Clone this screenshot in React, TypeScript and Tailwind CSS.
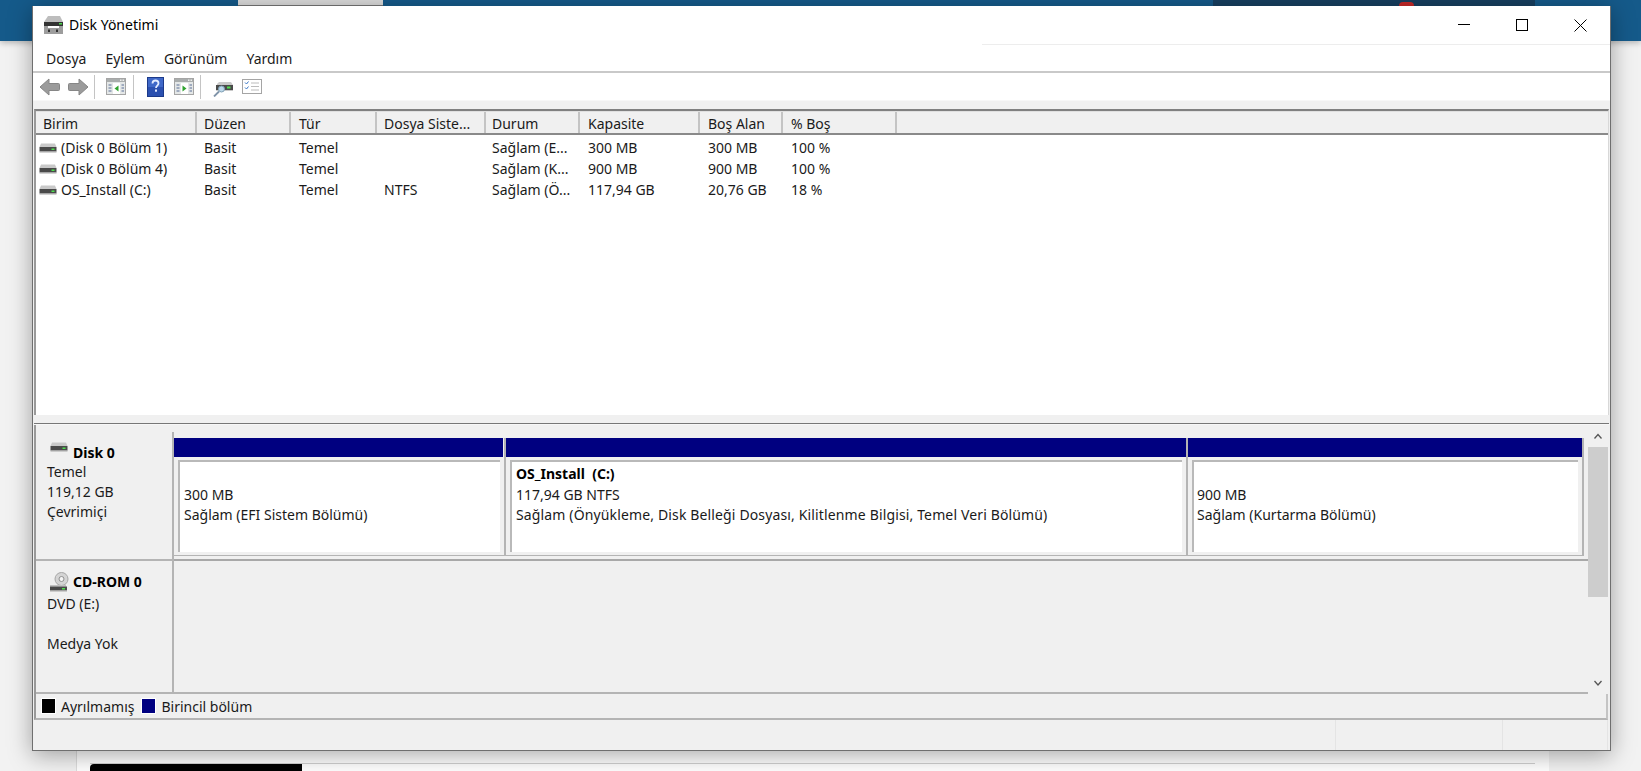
import React from "react"

const font = "font-['Noto_Sans',sans-serif]"

const columns = [
  { label: "Birim", width: "w-[161px]", pad: "pl-[7px]", cellPad: "pl-[3px]" },
  { label: "Düzen", width: "w-[94px]", pad: "pl-[7px]", cellPad: "pl-[7px]" },
  { label: "Tür", width: "w-[86px]", pad: "pl-[8px]", cellPad: "pl-[8px]" },
  { label: "Dosya Siste...", width: "w-[109px]", pad: "pl-[7px]", cellPad: "pl-[7px]" },
  { label: "Durum", width: "w-[94px]", pad: "pl-[6px]", cellPad: "pl-[6px]" },
  { label: "Kapasite", width: "w-[120px]", pad: "pl-[8px]", cellPad: "pl-[8px]" },
  { label: "Boş Alan", width: "w-[83px]", pad: "pl-[8px]", cellPad: "pl-[8px]" },
  { label: "% Boş", width: "w-[114px]", pad: "pl-[8px]", cellPad: "pl-[8px]" },
]

const rows = [
  ["(Disk 0 Bölüm 1)", "Basit", "Temel", "", "Sağlam (E...", "300 MB", "300 MB", "100 %"],
  ["(Disk 0 Bölüm 4)", "Basit", "Temel", "", "Sağlam (K...", "900 MB", "900 MB", "100 %"],
  ["OS_Install (C:)", "Basit", "Temel", "NTFS", "Sağlam (Ö...", "117,94 GB", "20,76 GB", "18 %"],
]

function DiskIcon() {
  return (
    <svg width="18" height="10" viewBox="0 0 18 10" className="shrink-0">
      <path d="M2 0.5h14l1.5 3.5H0.5z" fill="#c9c9c9" />
      <rect x="0.5" y="4" width="17" height="4.5" fill="#4a4a4a" />
      <rect x="0.5" y="8.5" width="17" height="1" fill="#a8a8a8" />
      <rect x="12.5" y="5.5" width="3" height="1.5" fill="#4ee04e" />
    </svg>
  )
}

function CdIcon() {
  return (
    <svg width="20" height="20" viewBox="0 0 20 20" className="shrink-0">
      <circle cx="12.500" cy="7" r="6.500" fill="#d4d4d4" stroke="#a6a6a6" />
      <circle cx="12.500" cy="7" r="2.500" fill="#f4f4f4" stroke="#8f8f8f" />
      <rect x="1" y="13" width="16" height="1.500" fill="#c0c0c0" />
      <rect x="1" y="14.500" width="17" height="4" fill="#4a4a4a" />
      <rect x="1" y="18.500" width="17" height="1" fill="#a8a8a8" />
      <rect x="13" y="16" width="3" height="1.500" fill="#4ee04e" />
    </svg>
  )
}

function TitleIcon() {
  return (
    <svg width="21" height="20" viewBox="0 0 21 20" className="shrink-0">
      <path d="M5 1h12l3 6H1z" fill="#bdbdbd" />
      <rect x="1" y="7" width="19" height="4" fill="#333" />
      <rect x="16" y="8" width="3" height="1.5" fill="#49d849" />
      <path d="M1 11h4v2h11v-2h4v8H1z" fill="#9d9d9d" />
      <rect x="5" y="14.5" width="2" height="2.5" fill="#333" />
      <rect x="13" y="14.5" width="2" height="2.5" fill="#333" />
    </svg>
  )
}

function ArrowIcon({ flip }: { flip?: boolean }) {
  return (
    <svg width="21" height="18" viewBox="0 0 21 18" className={flip ? "-scale-x-100" : ""}>
      <path d="M10 1L1 9l9 8v-4.500h9.500a1 1 0 0 0 1-1v-5a1 1 0 0 0-1-1H10z" fill="#9b9b9b" stroke="#868686" />
    </svg>
  )
}

function PaneIcon({ right }: { right?: boolean }) {
  return (
    <svg width="20" height="17" viewBox="0 0 20 17">
      <rect x="0.500" y="0.500" width="19" height="16" fill="#e4e7e7" stroke="#a5a5a5" />
      <rect x="1" y="1" width="18" height="3" fill="#a9adad" />
      <rect x="14" y="1.500" width="1.500" height="1.500" fill="#eee" />
      <rect x="16.500" y="1.500" width="1.500" height="1.500" fill="#eee" />
      <rect x="7" y="5" width="7" height="11" fill="#fff" />
      {right ? (
        <path d="M8.500 7.500l4 3-4 3z" fill="#2fa32f" />
      ) : (
        <path d="M12.500 7.500l-4 3 4 3z" fill="#2fa32f" />
      )}
      <path d="M2.500 7h3M2.500 10h3M2.500 13h3M15.500 7h2.500M15.500 10h2.500M15.500 13h2.500" stroke="#5a6f96" />
    </svg>
  )
}

function HelpIcon() {
  return (
    <svg width="17" height="20" viewBox="0 0 17 20">
      <rect x="0.500" y="0.500" width="16" height="19" fill="#2b50b0" stroke="#1c3a8a" />
      <rect x="1" y="1" width="15" height="9" fill="#3f68c8" />
      <path d="M5.500 6.500c0-2 1.300-3 3-3s3 1 3 2.800c0 2.200-2.500 2.300-2.500 4.700" fill="none" stroke="#e4ecff" strokeWidth="1.800" />
      <rect x="8" y="12.500" width="2" height="2.200" fill="#e4ecff" />
    </svg>
  )
}

function ProbeIcon() {
  return (
    <svg width="20" height="20" viewBox="0 0 20 20">
      <path d="M4 7l2-2h12l2 3v6H3z" fill="#c9c9c9" />
      <rect x="3" y="8" width="17" height="5" fill="#4a4a4a" />
      <rect x="14" y="9.500" width="3.500" height="2" fill="#4ee04e" />
      <path d="M6 14.500L1 19.500" stroke="#7f93a8" strokeWidth="1.800" />
      <circle cx="8.500" cy="12" r="3" fill="#bcd8ea" stroke="#7f9fb5" />
    </svg>
  )
}

function ChecklistIcon() {
  return (
    <svg width="20" height="15" viewBox="0 0 20 15">
      <rect x="0.500" y="0.500" width="19" height="14" fill="#fff" stroke="#a5a5a5" />
      <path d="M3 3.500l1.500 1.500 2-2.500M3 8.500l1.500 1.500 2-2.500" fill="none" stroke="#3a78c8" />
      <path d="M9 4h8M9 7.500h8M9 11h8" stroke="#bcbcbc" />
    </svg>
  )
}

function ToolbarDivider() {
  return <div className="w-px h-[24px] bg-[#c4c4c4]" />
}

function Partition({
  width,
  bar,
  lines,
  pad,
  spread,
}: {
  width: string
  bar: string
  lines: string[]
  pad: string
  spread?: boolean
}) {
  return (
    <div className={`${width} h-full flex flex-col border-r-2 border-b border-[#b4b4b4]`}>
      <div className={`${bar} h-[19px] bg-[#000080] shrink-0`} />
      <div className="flex-1 pt-[3px] pl-[4px] pr-[4px] pb-[3px]">
        <div className={`h-full bg-white border-l-2 border-t-2 border-[#b9b9b9] pt-[2px] ${pad} text-[14px] leading-[20.500px] text-[#1a1a1a]`}>
          {lines.map((line, i) => (
            <div
              key={i}
              className={`whitespace-pre h-[20.500px] ${i === 0 && line ? "font-bold text-black" : ""} ${spread && i === 2 ? "tracking-[0.14px]" : ""}`}
            >
              {line}
            </div>
          ))}
        </div>
      </div>
    </div>
  )
}

export default function App() {
  return (
    <div className={`relative w-[1641px] h-[771px] overflow-hidden bg-[#f2f2f2] ${font}`}>
      {/* page behind the window */}
      <div className="h-[41px] bg-[#155a8a] shadow-[0_2px_6px_rgba(0,0,0,0.25)] flex items-start">
        <div className="ml-[238px] w-[145px] h-[6px] bg-[#dcdcdc] border-b border-[#777]" />
        <div className="relative ml-auto mr-[106px] w-[322px] h-[6px] bg-[#173f60]">
          <div className="absolute left-[186px] top-[2px] w-[15px] h-[4px] rounded-t-sm bg-[#c62828]" />
        </div>
      </div>
      <div className="ml-[76px] w-[1473px] h-[730px] bg-white border-l border-[#dddddd] flex flex-col justify-end">
        <div className="ml-[13px] w-[1445px] border-t border-[#d0d0d0] h-[8px]">
          <div className="w-[212px] h-[7px] bg-black rounded-tl-sm" />
        </div>
      </div>

      {/* window */}
      <div className="absolute left-[32px] top-[6px] w-[1579px] h-[745px] flex flex-col bg-[#f0f0f0] border-x border-b border-[#6f6f6f] shadow-[0_4px_22px_rgba(0,0,0,0.35)]">
        <div className="h-[38px] shrink-0 bg-white flex items-center pl-[10px]">
          <TitleIcon />
          <span className="ml-[5px] -mt-[2px] text-[14px] text-black">Disk Yönetimi</span>
          <div className="ml-auto flex items-center">
            <svg width="12" height="12" viewBox="0 0 12 12" className="mr-[46px]">
              <path d="M0 5.500h12" stroke="#000" />
            </svg>
            <svg width="12" height="12" viewBox="0 0 12 12" className="mr-[46px]">
              <rect x="0.500" y="0.500" width="11" height="11" fill="none" stroke="#000" />
            </svg>
            <svg width="13" height="13" viewBox="0 0 13 13" className="mr-[23px]">
              <path d="M0.500 0.500l12 12M12.500 0.500l-12 12" stroke="#000" />
            </svg>
          </div>
        </div>
        <div className="h-px shrink-0 bg-white">
          <div className="ml-[949px] h-px bg-[#ededed]" />
        </div>
        <div className="h-[26px] shrink-0 bg-white flex items-center gap-[19px] pl-[13px] text-[14px] text-[#1a1a1a]">
          <span>Dosya</span>
          <span>Eylem</span>
          <span>Görünüm</span>
          <span>Yardım</span>
        </div>
        <div className="h-[2px] shrink-0 bg-[#c9c9c9]" />
        <div className="h-[27px] shrink-0 bg-white flex items-center pl-[6px]">
          <ArrowIcon />
          <div className="w-[8px]" />
          <ArrowIcon flip />
          <div className="w-[5px]" />
          <ToolbarDivider />
          <div className="w-[11px]" />
          <PaneIcon />
          <div className="w-[7px]" />
          <ToolbarDivider />
          <div className="w-[13px]" />
          <HelpIcon />
          <div className="w-[10px]" />
          <PaneIcon right />
          <div className="w-[6px]" />
          <ToolbarDivider />
          <div className="w-[12px]" />
          <ProbeIcon />
          <div className="w-[9px]" />
          <ChecklistIcon />
        </div>
        <div className="h-[9px] shrink-0 bg-[#f0f0f0] border-t border-[#f7f7f7]" />

        {/* volume list */}
        <div className="shrink-0 ml-[1px] mr-[1px] border-l-2 border-r border-t-2 border-l-[#9a9a9a] border-r-[#d8d8d8] border-t-[#808080]">
          <div className="h-[22px] flex bg-[#f0f0f0] border-t border-[#e0e0e0]">
            {columns.map((col) => (
              <div
                key={col.label}
                className={`${col.width} ${col.pad} shrink-0 text-[14px] leading-[22px] pt-px text-[#1a1a1a] border-r-2 border-[#c4c4c4] whitespace-nowrap overflow-hidden`}
              >
                {col.label}
              </div>
            ))}
          </div>
          <div className="h-[2px] bg-[#8a8a8a]" />
          <div className="h-[280px] bg-white text-[14px] text-[#1a1a1a] pt-[2px]">
            {rows.map((row) => (
              <div key={row[0]} className="flex h-[21px] items-center">
                {row.map((cell, i) => (
                  <div
                    key={i}
                    className={`${columns[i].width} ${columns[i].cellPad} shrink-0 whitespace-nowrap flex items-center gap-[4px]`}
                  >
                    {i === 0 && <DiskIcon />}
                    {cell}
                  </div>
                ))}
              </div>
            ))}
          </div>
        </div>
        <div className="h-[8px] shrink-0 bg-[#f0f0f0]" />
        <div className="h-px shrink-0 ml-[1px] mr-[1px] bg-[#777]" />
        <div className="h-px shrink-0 bg-[#f7f7f7]" />

        {/* disk area */}
        <div className="h-[269px] shrink-0 flex ml-[1px] mr-[2px] border-l-2 border-[#9a9a9a]">
          <div className="flex-1 min-w-0 flex flex-col">
            <div className="h-[136px] flex shrink-0">
              <div className="w-[138px] shrink-0 mt-[7px] pt-[11px] pl-[11px] text-[14px] leading-[20px] text-[#1a1a1a] bg-[#f0f0f0] border-r-2 border-b-2 border-[#b4b4b4]">
                <div className="flex items-center gap-[5px] pl-[3px] font-bold text-black">
                  <span className="-mt-[12px]">
                    <DiskIcon />
                  </span>
                  Disk 0
                </div>
                <div className="-mt-px">Temel</div>
                <div>119,12 GB</div>
                <div>Çevrimiçi</div>
              </div>
              <div className="flex-1 min-w-0 pt-[13px] pb-[3px] border-b-2 border-[#a8a8a8] flex">
                <Partition width="w-[332px]" bar="w-[329px]" pad="pl-[4px]" lines={["", "300 MB", "Sağlam (EFI Sistem Bölümü)"]} />
                <Partition
                  width="w-[682px]"
                  bar="w-[680px]"
                  pad="pl-[4px]"
                  spread
                  lines={["OS_Install  (C:)", "117,94 GB NTFS", "Sağlam (Önyükleme, Disk Belleği Dosyası, Kilitlenme Bilgisi, Temel Veri Bölümü)"]}
                />
                <Partition width="w-[396px]" bar="w-[394px]" pad="pl-[3px]" lines={["", "900 MB", "Sağlam (Kurtarma Bölümü)"]} />
              </div>
            </div>
            <div className="flex-1 flex min-h-0 border-b-2 border-[#b4b4b4]">
              <div className="w-[138px] shrink-0 pt-[9px] pl-[13px] text-[14px] leading-[20px] text-[#1a1a1a] border-r-2 border-[#b4b4b4]">
                <div className="flex items-center gap-[4px] font-bold text-black h-[24px]">
                  <CdIcon />
                  CD-ROM 0
                </div>
                <div className="-ml-[2px]">DVD (E:)</div>
                <div className="h-[20px]" />
                <div className="-ml-[2px]">Medya Yok</div>
              </div>
              <div className="flex-1" />
            </div>
          </div>
          {/* scrollbar */}
          <div className="w-[20px] shrink-0 flex flex-col items-center bg-[#f0f0f0]">
            <svg width="10" height="22" viewBox="0 0 10 22" className="shrink-0">
              <path d="M1.500 13.500L5 9.500l3.500 4" fill="none" stroke="#555" strokeWidth="1.300" />
            </svg>
            <div className="w-full h-[150px] bg-[#cdcdcd] shrink-0" />
            <div className="flex-1" />
            <svg width="10" height="22" viewBox="0 0 10 22" className="shrink-0">
              <path d="M1.500 9L5 13l3.500-4" fill="none" stroke="#555" strokeWidth="1.300" />
            </svg>
          </div>
        </div>

        {/* legend */}
        <div className="h-[26px] shrink-0 ml-[1px] mr-[2px] flex items-center pl-[5px] text-[14px] text-[#1a1a1a] border-l-2 border-r-2 border-b-2 border-l-[#9a9a9a] border-r-[#c4c4c4] border-b-[#b4b4b4]">
          <div className="w-[15px] h-[16px] bg-black border border-white" />
          <span className="ml-[5px]">Ayrılmamış</span>
          <div className="ml-[7px] w-[15px] h-[16px] bg-[#000080] border border-white" />
          <span className="ml-[5px]">Birincil bölüm</span>
        </div>

        {/* status bar */}
        <div className="flex-1 flex justify-end">
          <div className="w-[167px] border-l border-[#e4e4e4]" />
          <div className="w-[106px] border-l border-r border-[#e4e4e4] mr-[2px]" />
        </div>
      </div>
    </div>
  )
}
